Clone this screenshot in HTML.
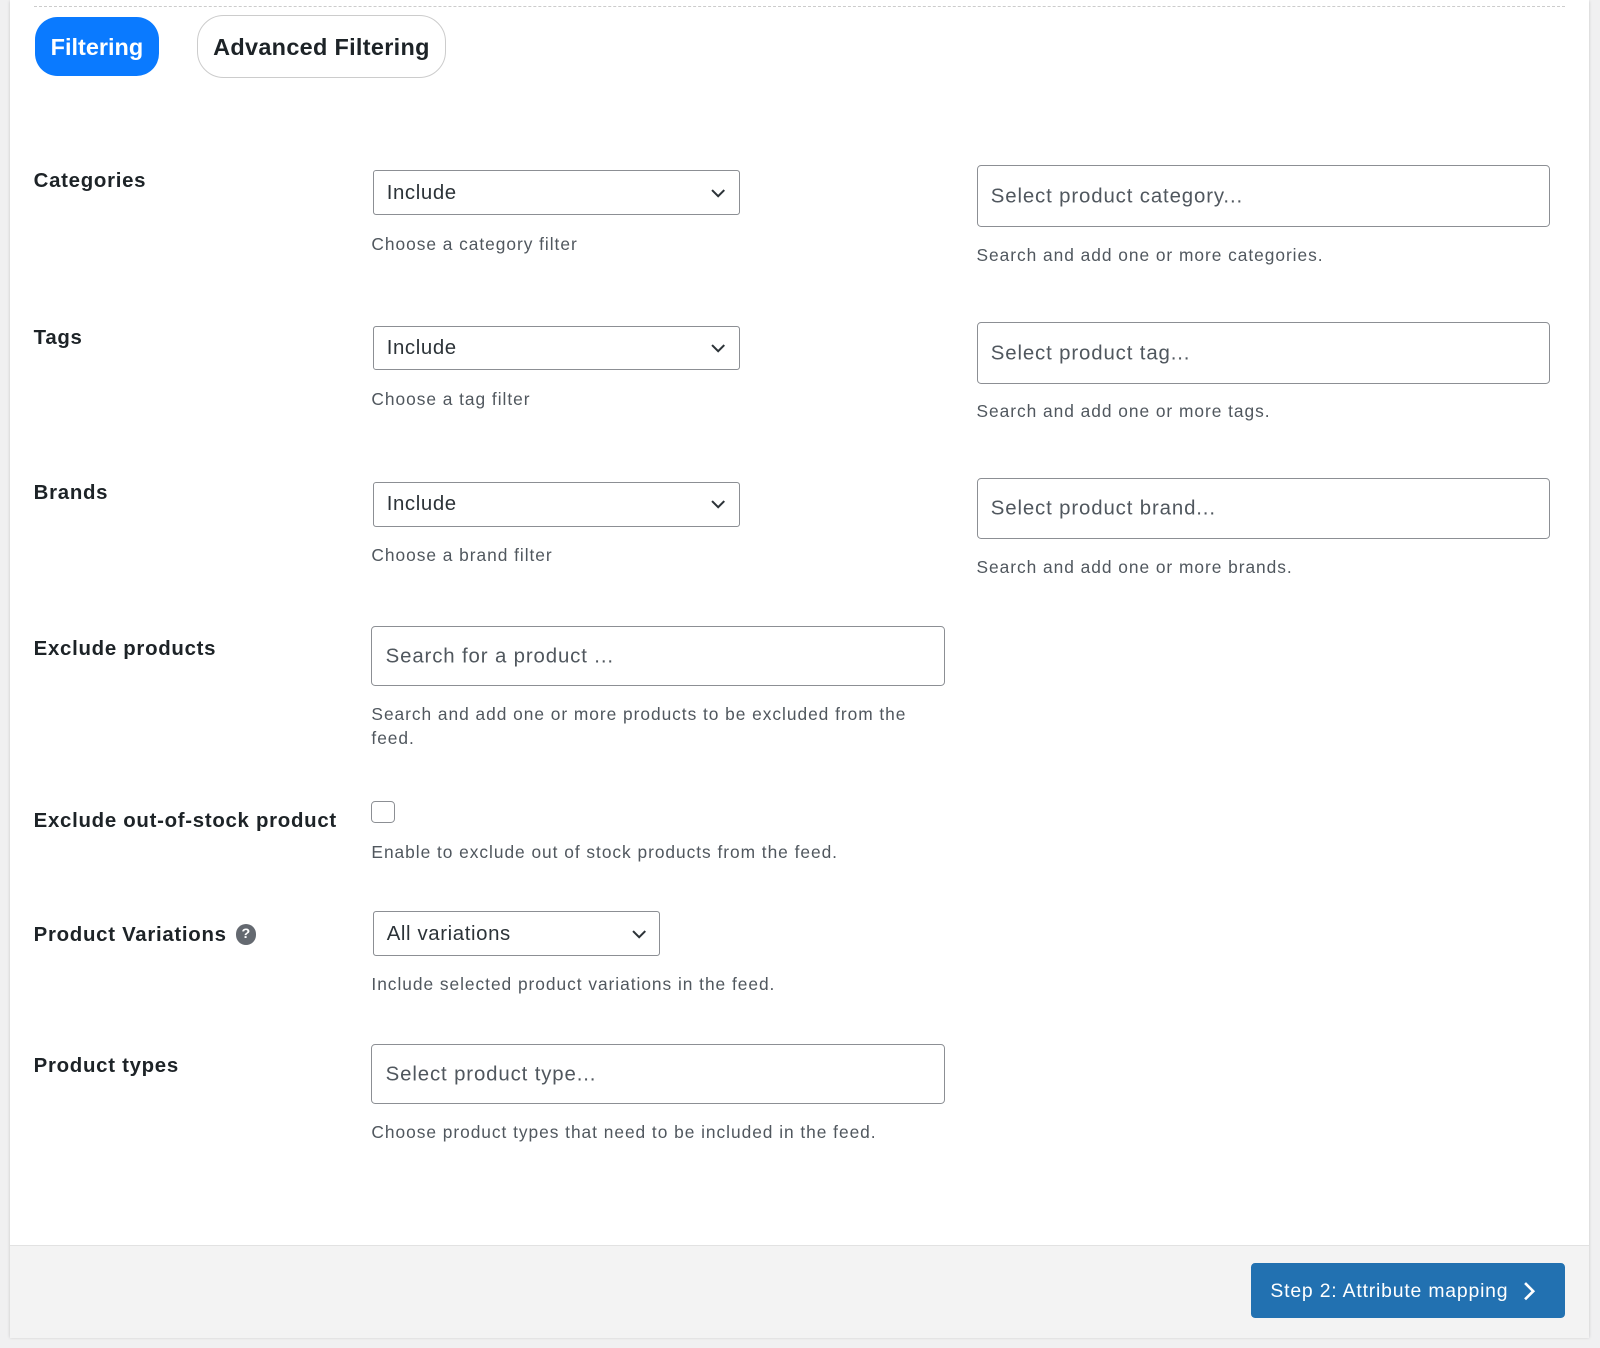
<!DOCTYPE html>
<html><head><meta charset="utf-8"><style>
html,body{margin:0;padding:0;background:#f0f0f1;width:1600px;height:1348px;overflow:hidden}
#w{zoom:1.020408;position:relative;width:1568px;height:1321px;font-family:"Liberation Sans",Arial,sans-serif}
.panel{position:absolute;left:10px;top:0;width:1547px;height:1310px;background:#fff;box-shadow:0 1px 3px rgba(0,0,0,.18)}
.foot{position:absolute;left:10px;top:1220px;width:1547px;height:90px;background:#f3f3f3;border-top:1px solid #e2e2e2}
.a{position:absolute;white-space:nowrap}
.lbl{font-weight:bold;font-size:20px;color:#1d2327;line-height:24px;letter-spacing:0.7px}
.help{font-size:17px;color:#50575e;line-height:23px;letter-spacing:0.95px}
.sel{border:1px solid #8c8f94;border-radius:3px;background:#fff;box-sizing:border-box;font-size:20px;color:#2c3338;letter-spacing:0.6px}
.sel span{position:absolute;left:12px;top:50%;transform:translateY(-48%)}
.sel svg{position:absolute;right:12px;top:50%;margin-top:-6px}
.inp{border:1px solid #8c8f94;border-radius:4px;background:#fff;box-sizing:border-box;font-size:20px;color:#50575e;letter-spacing:0.85px}
.inp span{position:absolute;left:13px;top:50%;transform:translateY(-46%)}
</style></head><body><div id="w">
<div class="panel"></div>
<div class="foot"></div>
<div class="a" style="left:33px;top:6px;width:1501px;border-top:1px dashed #ccc"></div>

<div class="a" style="left:34px;top:17px;width:122px;height:57px;background:#0a7aff;border-radius:22px;color:#fff;font-weight:bold;font-size:23px;line-height:59px;text-align:center">Filtering</div>
<div class="a" style="left:193px;top:15px;width:244px;height:61px;box-sizing:border-box;border:1px solid #ccc;border-radius:26px;color:#1d2327;font-weight:bold;font-size:23px;line-height:61px;text-align:center;letter-spacing:0.3px">Advanced Filtering</div>

<div class="a lbl" style="left:33px;top:166px">Categories</div>
<div class="a lbl" style="left:33px;top:319px">Tags</div>
<div class="a lbl" style="left:33px;top:471px">Brands</div>
<div class="a lbl" style="left:33px;top:624px">Exclude products</div>
<div class="a lbl" style="left:33px;top:793px">Exclude out-of-stock product</div>
<div class="a lbl" style="left:33px;top:905px">Product Variations</div>
<div class="a" style="left:231px;top:906px;width:20px;height:20px;border-radius:50%;background:#646970;color:#fff;font-weight:bold;font-size:14px;line-height:20px;text-align:center">?</div>
<div class="a lbl" style="left:33px;top:1033px">Product types</div>

<div class="a sel" style="left:366px;top:167px;width:359px;height:44px"><span>Include</span><svg width="16" height="12" viewBox="0 0 16 12"><path d="M2 3l6 6 6-6" fill="none" stroke="#2c3338" stroke-width="2"/></svg></div>
<div class="a sel" style="left:366px;top:319px;width:359px;height:44px"><span>Include</span><svg width="16" height="12" viewBox="0 0 16 12"><path d="M2 3l6 6 6-6" fill="none" stroke="#2c3338" stroke-width="2"/></svg></div>
<div class="a sel" style="left:366px;top:472px;width:359px;height:44px"><span>Include</span><svg width="16" height="12" viewBox="0 0 16 12"><path d="M2 3l6 6 6-6" fill="none" stroke="#2c3338" stroke-width="2"/></svg></div>
<div class="a sel" style="left:366px;top:893px;width:281px;height:44px"><span>All variations</span><svg width="16" height="12" viewBox="0 0 16 12"><path d="M2 3l6 6 6-6" fill="none" stroke="#2c3338" stroke-width="2"/></svg></div>

<div class="a help" style="left:364px;top:228px">Choose a category filter</div>
<div class="a help" style="left:364px;top:380px">Choose a tag filter</div>
<div class="a help" style="left:364px;top:533px">Choose a brand filter</div>

<div class="a inp" style="left:957px;top:162px;width:562px;height:60px"><span>Select product category...</span></div>
<div class="a inp" style="left:957px;top:316px;width:562px;height:60px"><span>Select product tag...</span></div>
<div class="a inp" style="left:957px;top:468px;width:562px;height:60px"><span>Select product brand...</span></div>
<div class="a help" style="left:957px;top:239px">Search and add one or more categories.</div>
<div class="a help" style="left:957px;top:392px">Search and add one or more tags.</div>
<div class="a help" style="left:957px;top:545px">Search and add one or more brands.</div>

<div class="a inp" style="left:364px;top:613px;width:562px;height:59px"><span>Search for a product ...</span></div>
<div class="a help" style="left:364px;top:689px">Search and add one or more products to be excluded from the</div>
<div class="a help" style="left:364px;top:712px">feed.</div>

<div class="a" style="left:364px;top:785px;width:23px;height:22px;box-sizing:border-box;border:1px solid #8c8f94;border-radius:4px;background:#fff"></div>
<div class="a help" style="left:364px;top:824px">Enable to exclude out of stock products from the feed.</div>
<div class="a help" style="left:364px;top:954px">Include selected product variations in the feed.</div>

<div class="a inp" style="left:364px;top:1023px;width:562px;height:59px"><span>Select product type...</span></div>
<div class="a help" style="left:364px;top:1099px">Choose product types that need to be included in the feed.</div>

<div class="a" style="left:1226px;top:1238px;width:308px;height:54px;background:#2271b1;border-radius:4px;color:#fff;font-size:19px;line-height:55px;letter-spacing:0.8px"><span style="position:absolute;left:19px">Step 2: Attribute mapping</span><svg style="position:absolute;left:266px;top:17px" width="14" height="20" viewBox="0 0 14 20"><path d="M3 2l8 8-8 8" fill="none" stroke="#fff" stroke-width="2.6"/></svg></div>
</div></body></html>
